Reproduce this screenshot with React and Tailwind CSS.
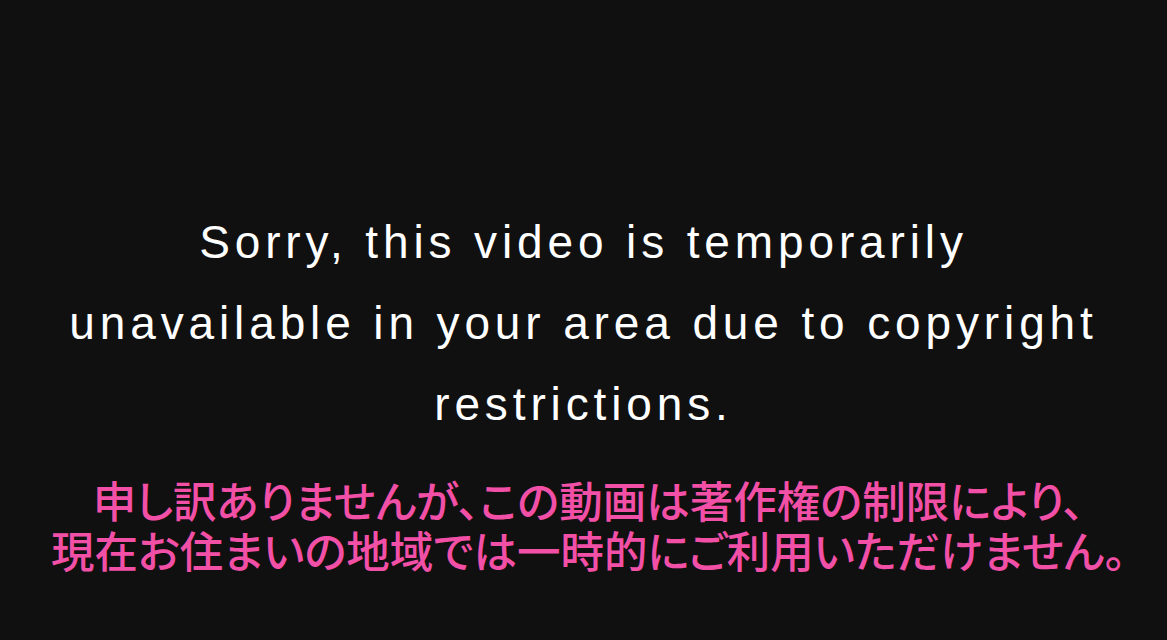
import React from 'react';

const App = () => {
    return (
        <div className="w-full h-[640px] bg-[#101010] overflow-hidden flex flex-col items-center pt-[202px]">
            {/* English message */}
            <p className="text-white text-center text-[46px] leading-[81px] tracking-[0.106em] font-['Liberation_Sans','Noto_Sans_CJK_JP',sans-serif]">
                Sorry, this video is temporarily
                <br />
                unavailable in your area due to copyright
                <br />
                restrictions.
            </p>

            {/* Japanese message */}
            <p className="mt-[30px] pl-[10px] text-[#f24fa7] text-center text-[43.5px] leading-[50px] font-medium [font-feature-settings:'palt'] font-['Noto_Sans_CJK_JP',sans-serif]">
                申し訳ありませんが、この動画は著作権の制限により、
                <br />
                現在お住まいの地域では一時的にご利用いただけません。
            </p>
        </div>
    );
};

export default App;
